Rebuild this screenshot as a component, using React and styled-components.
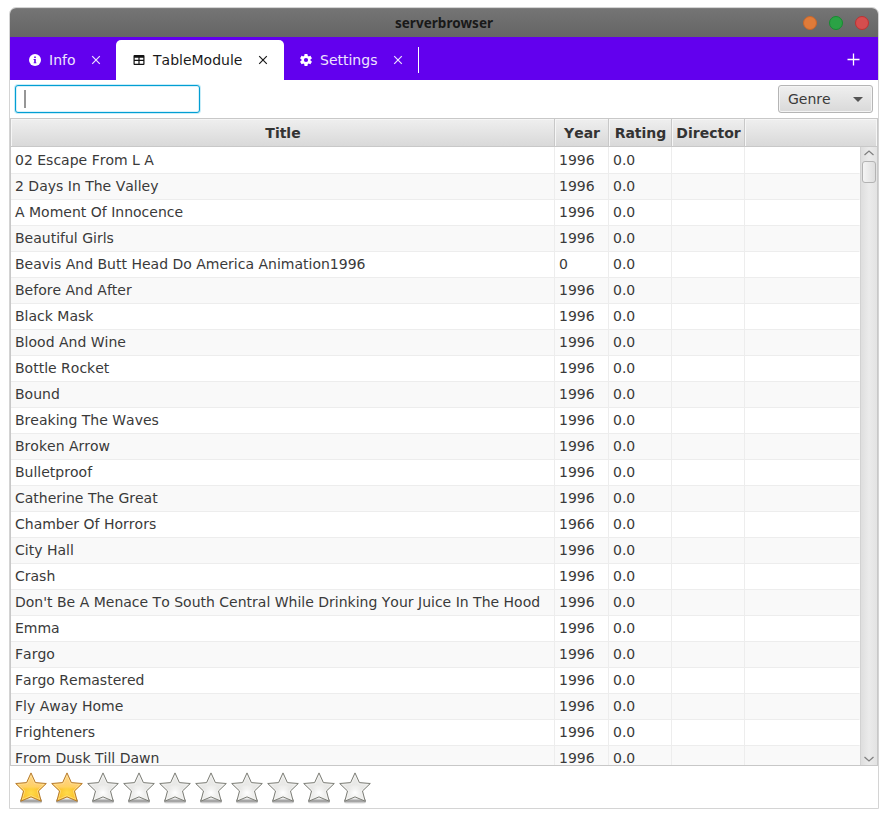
import React from 'react';
import styled, { createGlobalStyle } from 'styled-components';

const GlobalStyle = createGlobalStyle`
  * { box-sizing: border-box; }
  body { margin: 0; background: #fff; font-family: "DejaVu Sans", sans-serif; font-size: 14px; color: #3a3a3a; font-kerning: none; }
`;

const Window = styled.main`
  width: 870px;
  height: 802px;
  margin: 7px 0 0 9px;
  border: 1px solid #d4d4d4;
  border-radius: 7px 7px 0 0;
  background: #fff;
  display: flex;
  flex-direction: column;
  overflow: hidden;
`;

const TitleBar = styled.header`
  height: 29px;
  flex: none;
  display: grid;
  grid-template-columns: 1fr auto 1fr;
  align-items: center;
  background: linear-gradient(#747474, #656565);
  border-top: 1px solid #7d7d7d;
`;

const WindowTitle = styled.h1`
  grid-column: 2;
  margin: 0;
  font: bold 13.5px/28px "Noto Sans", sans-serif;
  letter-spacing: 0.05px;
  color: #191919;
  white-space: nowrap;
`;

const WindowButtons = styled.div`
  display: flex;
  justify-content: flex-end;
  gap: 12px;
  padding-right: 9px;
`;

const WindowButton = styled.button`
  width: 14px;
  height: 14px;
  padding: 0;
  border-radius: 50%;
  border: 1px solid ${(p) => p.$edge};
  background: ${(p) => p.$fill};
`;

const TabBar = styled.nav`
  height: 43px;
  flex: none;
  display: flex;
  align-items: flex-end;
  background: #6200ee;
`;

const Tab = styled.div`
  width: ${(p) => p.$width}px;
  height: 40px;
  flex: none;
  display: flex;
  align-items: center;
  padding-left: ${(p) => p.$inset}px;
  border-radius: 5px 5px 0 0;
  background: ${(p) => (p.$active ? '#fff' : 'transparent')};
  color: ${(p) => (p.$active ? '#1a1a1a' : '#eee4fd')};
  svg { flex: none; display: block; }
`;

const TabLabel = styled.span`
  width: ${(p) => p.$width}px;
  margin-left: 8px;
  line-height: 20px;
  white-space: nowrap;
`;

const Divider = styled.div`
  width: 1px;
  height: 26px;
  margin: 0 0 7px 3px;
  background: #fff;
`;

const AddButton = styled.button`
  width: 13px;
  height: 13px;
  margin: 0 18px 14px auto;
  padding: 0;
  border: 0;
  background: none;
  svg { display: block; }
`;

const Toolbar = styled.div`
  height: 38px;
  flex: none;
  display: flex;
  align-items: center;
  justify-content: space-between;
  padding: 0 5px;
`;

const SearchField = styled.div`
  width: 185px;
  height: 28px;
  padding: 4px 8px;
  border: 1px solid #039ed3;
  border-radius: 3px;
  background: #fff;
  box-shadow: inset 0 0 0 1px #d8f1fa, 0 0 0 1px #c8edf8;
`;

const Caret = styled.span`
  display: block;
  width: 2px;
  height: 18px;
  background: #969696;
`;

const GenreButton = styled.button`
  width: 95px;
  height: 28px;
  display: flex;
  align-items: center;
  justify-content: space-between;
  padding: 0 9px;
  border: 1px solid #b5b5b5;
  border-radius: 3px;
  background: linear-gradient(#efefef, #d9d9d9);
  box-shadow: inset 0 0 0 1px #f4f4f4;
  color: #3a3a3a;
  font: 14px "DejaVu Sans", sans-serif;
  font-kerning: none;
`;

const Table = styled.section`
  height: 648px;
  flex: none;
  border: 1px solid #c8c8c8;
  display: flex;
  flex-direction: column;
`;

const columns = '544px 54px 63px 73px 1fr';

const HeaderRow = styled.div`
  height: 28px;
  flex: none;
  display: grid;
  grid-template-columns: ${columns};
  border-bottom: 1px solid #c8c8c8;
  background: linear-gradient(#efefef, #d9d9d9);
`;

const HeaderCell = styled.div`
  display: flex;
  align-items: center;
  justify-content: center;
  padding-left: 1px;
  border-right: 1px solid ${(p) => (p.$last ? '#f6f6f6' : '#c8c8c8')};
  box-shadow: inset 1px 1px 0 #f6f6f6;
  font-weight: bold;
  color: #333;
  white-space: nowrap;
`;

const Body = styled.div`
  flex: 1;
  min-height: 0;
  display: flex;
`;

const Rows = styled.div`
  flex: 1;
  overflow: hidden;
`;

const Row = styled.div`
  height: 26px;
  display: grid;
  grid-template-columns: ${columns};
  background: ${(p) => (p.$odd ? '#f9f9f9' : '#fff')};
`;

const Cell = styled.div`
  padding-left: 4px;
  border-right: 1px solid ${(p) => (p.$last ? 'transparent' : '#ededed')};
  border-bottom: 1px solid #ededed;
  line-height: 26px;
  white-space: nowrap;
`;

const ScrollBar = styled.div`
  width: 17px;
  flex: none;
  display: flex;
  flex-direction: column;
  align-items: center;
  border-left: 1px solid #d2d2d2;
  background: linear-gradient(90deg, #dedede, #ebebeb 50%, #e3e3e3);
  padding: 3px 0 3px;
  svg { display: block; }
`;

const Thumb = styled.div`
  width: 14px;
  height: 22px;
  margin: 5px 0 auto;
  border: 1px solid #b3b3b3;
  border-radius: 3px;
  background: linear-gradient(90deg, #f4f4f4, #dedede);
`;

const Rating = styled.footer`
  flex: 1;
  display: flex;
  gap: 4px;
  padding: 6px 5px;
  svg { display: block; }
`;

const InfoIcon = () => (
  <svg width="12" height="12" viewBox="0 0 12 12">
    <circle cx="6" cy="6" r="6" fill="#fff" />
    <path d="M5.2 2.5h1.6v1.5H5.2zM4.6 5h2.2v3.4h.6v.9H4.6v-.9h.6V5.9h-.6z" fill="#6200ee" />
  </svg>
);

const TableIcon = () => (
  <svg width="12" height="12" viewBox="0 0 12 12">
    <path fillRule="evenodd" fill="#111" d="M1.5 1h9Q11.5 1 11.5 2v8q0 1-1 1h-9q-1 0-1-1V2q0-1 1-1zM1.7 3.8v2h3.7v-2zM6.6 3.8v2h3.7v-2zM1.7 7v2.8h3.7V7zM6.6 7v2.8h3.7V7z" />
  </svg>
);

const GearIcon = () => (
  <svg width="12" height="12" viewBox="2 2 20 20">
    <path fill="#fff" d="M12 15.5A3.5 3.5 0 0 1 8.5 12 3.5 3.5 0 0 1 12 8.5a3.5 3.5 0 0 1 3.5 3.5 3.5 3.5 0 0 1-3.5 3.5m7.43-2.53c.04-.32.07-.64.07-.97s-.03-.66-.07-1l2.11-1.63c.19-.15.24-.42.12-.64l-2-3.46c-.12-.22-.39-.31-.61-.22l-2.49 1c-.52-.39-1.06-.73-1.69-.98l-.37-2.65A.506.506 0 0 0 14 2h-4c-.25 0-.46.18-.5.42l-.37 2.65c-.63.25-1.17.59-1.69.98l-2.49-1c-.22-.09-.49 0-.61.22l-2 3.46c-.13.22-.07.49.12.64L4.57 11c-.04.34-.07.67-.07 1s.03.65.07.97l-2.11 1.66c-.19.15-.25.42-.12.64l2 3.46c.12.22.39.3.61.22l2.49-1.01c.52.4 1.06.74 1.69.99l.37 2.65c.04.24.25.42.5.42h4c.25 0 .46-.18.5-.42l.37-2.65c.63-.26 1.17-.59 1.69-.99l2.49 1.01c.22.08.49 0 .61-.22l2-3.46c.12-.22.07-.49-.12-.64z" />
  </svg>
);

const CloseIcon = () => (
  <svg width="10" height="10" viewBox="0 0 10 10">
    <path d="M1.2 1.2l7.6 7.6M8.8 1.2L1.2 8.8" stroke="currentColor" strokeWidth="1.2" />
  </svg>
);

const Chevron = ({ down }) => (
  <svg width="10" height="6" viewBox="0 0 10 6">
    <path d={down ? 'M.5 1L5 5L9.5 1' : 'M.5 5L5 1L9.5 5'} fill="none" stroke="#808080" strokeWidth="1.3" />
  </svg>
);

const STAR = 'M16 .9L20.4 10.6L31.3 11.5L23.5 19L26.2 29.2L16 24.9L5.8 29.2L8.5 19L.7 11.5L11.6 10.6Z';

const Star = ({ on }) => {
  const k = on ? 'on' : 'off';
  return (
    <svg width="32" height="32" viewBox="0 0 32 32">
      <defs>
        <linearGradient id={`body-${k}`} x2="0" y2="1">
          <stop offset="0" stopColor={on ? '#ffd68c' : '#ebebe9'} />
          <stop offset=".5" stopColor={on ? '#ffcf68' : '#e8e8e6'} />
          <stop offset=".58" stopColor={on ? '#fbc02c' : '#e2e2e0'} />
          <stop offset="1" stopColor={on ? '#fdc62e' : '#efefed'} />
        </linearGradient>
        <radialGradient id={`glow-${k}`} cx=".5" cy=".7" r=".3">
          <stop offset="0" stopColor={on ? '#ffdb4a' : '#fff'} />
          <stop offset="1" stopColor={on ? '#ffdb4a' : '#fff'} stopOpacity="0" />
        </radialGradient>
        <linearGradient id={`shade-${k}`} x2="0" y2="1">
          <stop offset="0" stopColor="#000" stopOpacity="0" />
          <stop offset=".5" stopColor="#000" stopOpacity=".42" />
          <stop offset="1" stopColor="#000" stopOpacity="0" />
        </linearGradient>
      </defs>
      <rect x="5" y="26" width="22" height="6" rx="3" fill={`url(#shade-${k})`} />
      <path d={STAR} fill={`url(#body-${k})`} />
      <path d={STAR} fill={`url(#glow-${k})`} />
      <path d="M16 3.3L19.7 11.6L28.8 12.4L22.3 18.6L24.6 27.3L16 23.7L7.4 27.3L9.7 18.6L3.2 12.4L12.3 11.6Z" fill="none" stroke={on ? '#ffe6a0' : '#f7f7f5'} strokeOpacity=".8" strokeWidth=".8" />
      <path d={STAR} fill="none" stroke={on ? '#b57a2c' : '#7c7d76'} strokeWidth="1" strokeLinejoin="round" />
    </svg>
  );
};

const movies = [
  ['02 Escape From L A', '1996'],
  ['2 Days In The Valley', '1996'],
  ['A Moment Of Innocence', '1996'],
  ['Beautiful Girls', '1996'],
  ['Beavis And Butt Head Do America Animation1996', '0'],
  ['Before And After', '1996'],
  ['Black Mask', '1996'],
  ['Blood And Wine', '1996'],
  ['Bottle Rocket', '1996'],
  ['Bound', '1996'],
  ['Breaking The Waves', '1996'],
  ['Broken Arrow', '1996'],
  ['Bulletproof', '1996'],
  ['Catherine The Great', '1996'],
  ['Chamber Of Horrors', '1966'],
  ['City Hall', '1996'],
  ['Crash', '1996'],
  ["Don't Be A Menace To South Central While Drinking Your Juice In The Hood", '1996'],
  ['Emma', '1996'],
  ['Fargo', '1996'],
  ['Fargo Remastered', '1996'],
  ['Fly Away Home', '1996'],
  ['Frighteners', '1996'],
  ['From Dusk Till Dawn', '1996'],
];

export default function App() {
  return (
    <>
      <GlobalStyle />
      <Window>
        <TitleBar>
          <WindowTitle>serverbrowser</WindowTitle>
          <WindowButtons>
            <WindowButton $fill="#e07b39" $edge="#c9662a" aria-label="Minimize" />
            <WindowButton $fill="#2ba245" $edge="#168c30" aria-label="Maximize" />
            <WindowButton $fill="#d54e4e" $edge="#bd3232" aria-label="Close" />
          </WindowButtons>
        </TitleBar>
        <TabBar>
          <Tab $width={106} $inset={19}>
            <InfoIcon />
            <TabLabel $width={42}>Info</TabLabel>
            <CloseIcon />
          </Tab>
          <Tab $width={168} $inset={17} $active>
            <TableIcon />
            <TabLabel $width={105}>TableModule</TabLabel>
            <CloseIcon />
          </Tab>
          <Tab $width={131} $inset={16}>
            <GearIcon />
            <TabLabel $width={73}>Settings</TabLabel>
            <CloseIcon />
          </Tab>
          <Divider />
          <AddButton aria-label="Add tab">
            <svg width="13" height="13" viewBox="0 0 13 13">
              <path d="M6.5 .5v12M.5 6.5h12" stroke="#fff" strokeWidth="1.3" />
            </svg>
          </AddButton>
        </TabBar>
        <Toolbar>
          <SearchField><Caret /></SearchField>
          <GenreButton>
            Genre
            <svg width="10" height="5" viewBox="0 0 10 5"><path d="M0 0h10L5 5z" fill="#555" /></svg>
          </GenreButton>
        </Toolbar>
        <Table>
          <HeaderRow>
            <HeaderCell>Title</HeaderCell>
            <HeaderCell>Year</HeaderCell>
            <HeaderCell>Rating</HeaderCell>
            <HeaderCell>Director</HeaderCell>
            <HeaderCell $last />
          </HeaderRow>
          <Body>
            <Rows>
              {movies.map(([title, year], i) => (
                <Row key={title} $odd={i % 2 === 1}>
                  <Cell>{title}</Cell>
                  <Cell>{year}</Cell>
                  <Cell>0.0</Cell>
                  <Cell />
                  <Cell $last />
                </Row>
              ))}
            </Rows>
            <ScrollBar>
              <Chevron />
              <Thumb />
              <Chevron down />
            </ScrollBar>
          </Body>
        </Table>
        <Rating>
          {Array.from({ length: 10 }, (_, i) => <Star key={i} on={i < 2} />)}
        </Rating>
      </Window>
    </>
  );
}
